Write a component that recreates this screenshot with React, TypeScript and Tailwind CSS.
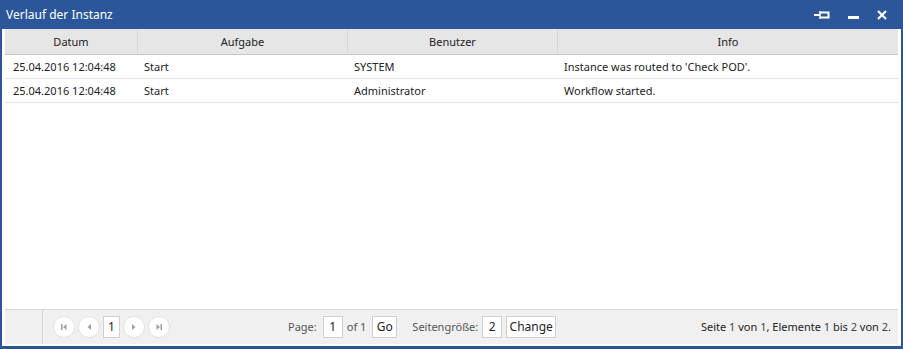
const rows = [
  { datum: "25.04.2016 12:04:48", aufgabe: "Start", benutzer: "SYSTEM", info: "Instance was routed to 'Check POD'." },
  { datum: "25.04.2016 12:04:48", aufgabe: "Start", benutzer: "Administrator", info: "Workflow started." },
];

function PagerButton({ children }: { children: React.ReactNode }) {
  return (
    <div className="size-[22px] rounded-full border border-[#e3e3e3] bg-white grid place-items-center">
      {children}
    </div>
  );
}

function Box({ children, className = "" }: { children: React.ReactNode; className?: string }) {
  return (
    <div className={`h-[22px] border border-[#d0d0d0] bg-white grid place-items-center text-[#222] ${className}`}>
      {children}
    </div>
  );
}

export default function App() {
  return (
    <div
      className="w-[903px] h-[349px] bg-[#2b579a] flex flex-col text-[11px] text-[#222]"
      style={{ fontFamily: '"Segoe UI", "Noto Sans", "Open Sans", sans-serif' }}
    >
      <div className="h-[29px] shrink-0 flex items-center pl-[6px] pr-[16px] text-white text-[12px]">
        <span className="flex-1">Verlauf der Instanz</span>
        <div className="flex items-center gap-[18px]">
          <svg width="16" height="10" viewBox="0 0 16 10" fill="none" stroke="white" strokeWidth="2">
            <line x1="0" y1="5" x2="6" y2="5" />
            <line x1="6" y1="1" x2="6" y2="9" strokeWidth="1.5" />
            <path d="M6 2.5 H14.5 V7.5 H6" />
          </svg>
          <svg width="11" height="10" viewBox="0 0 11 10">
            <rect x="0" y="6" width="11" height="3" fill="white" />
          </svg>
          <svg width="10" height="10" viewBox="0 0 10 10" stroke="white" strokeWidth="2.2">
            <line x1="1" y1="1" x2="9" y2="9" />
            <line x1="9" y1="1" x2="1" y2="9" />
          </svg>
        </div>
      </div>

      <div className="flex-1 ml-[2px] mr-[2px] mb-[3px] bg-white px-[3px] pb-[2px] flex flex-col">
        <div className="flex-1">
          <div className="grid grid-cols-[132px_210px_210px_1fr] h-[26px] bg-[#e6e6e6] border-b border-[#c6c6c6]">
            {["Datum", "Aufgabe", "Benutzer", "Info"].map((h, i) => (
              <div
                key={h}
                className={`flex items-center justify-center pt-[2px] ${i > 0 ? "border-l border-[#d8d8d8]" : ""}`}
              >
                {h}
              </div>
            ))}
          </div>
          {rows.map((r, i) => (
            <div key={i} className="grid grid-cols-[132px_210px_210px_1fr] h-[24px] border-b border-[#e4e4e4] items-center pt-[2px]">
              <div className="pl-[8px]">{r.datum}</div>
              <div className="pl-[7px]">{r.aufgabe}</div>
              <div className="pl-[7px]">{r.benutzer}</div>
              <div className="pl-[7px]">{r.info}</div>
            </div>
          ))}
        </div>

        <div className="h-[35px] shrink-0 bg-[#f0f0f0] border-t border-[#d6d6d6] flex items-center">
          <div className="w-[38px] self-stretch border-r border-[#d6d6d6]" />
          <div className="flex items-center gap-[3px] pl-[10px]">
            <PagerButton>
              <svg width="6" height="6" viewBox="0 0 6 6" fill="#a0a0a0">
                <rect x="0" y="0" width="1.5" height="6" />
                <path d="M5.5 0 L2 3 L5.5 6 Z" />
              </svg>
            </PagerButton>
            <PagerButton>
              <svg width="4" height="6" viewBox="0 0 4 6" fill="#a0a0a0">
                <path d="M4 0 L0.5 3 L4 6 Z" />
              </svg>
            </PagerButton>
            <Box className="w-[17px] text-[12px]">1</Box>
            <PagerButton>
              <svg width="4" height="6" viewBox="0 0 4 6" fill="#a0a0a0">
                <path d="M0 0 L3.5 3 L0 6 Z" />
              </svg>
            </PagerButton>
            <PagerButton>
              <svg width="6" height="6" viewBox="0 0 6 6" fill="#a0a0a0">
                <path d="M0.5 0 L4 3 L0.5 6 Z" />
                <rect x="4.5" y="0" width="1.5" height="6" />
              </svg>
            </PagerButton>
          </div>

          <div className="flex items-center ml-[118px] text-[#555]">
            <span>Page:</span>
            <Box className="w-[20px] ml-[6px] text-[12px]">1</Box>
            <span className="ml-[4px]">of 1</span>
            <Box className="w-[25px] ml-[6px] text-[12px]">Go</Box>
            <span className="ml-[15px]">Seitengröße:</span>
            <Box className="w-[20px] ml-[4px] text-[12px]">2</Box>
            <Box className="w-[50px] ml-[4px] text-[12px]">Change</Box>
          </div>

          <div className="flex-1 text-right pr-[7px] text-[#222]">
            Seite <span className="text-[#444]">1</span> von <span className="text-[#444]">1</span>, Elemente{" "}
            <span className="text-[#444]">1</span> bis <span className="text-[#444]">2</span> von{" "}
            <span className="text-[#444]">2</span>.
          </div>
        </div>
      </div>
    </div>
  );
}
